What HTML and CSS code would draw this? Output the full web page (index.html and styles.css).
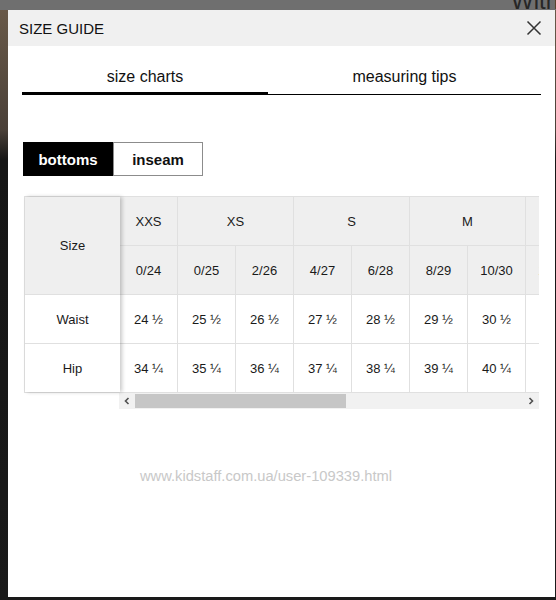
FILE: index.html
```html
<!DOCTYPE html>
<html lang="en">
<head>
<meta charset="utf-8">
<title>Size Guide</title>
<link rel="stylesheet" href="styles.css">
</head>
<body>
<div class="backdrop-text">With</div>
<div class="modal">
  <div class="modal-header">
    <span class="modal-title">SIZE GUIDE</span>
    <span class="close" aria-label="Close">
      <svg width="16" height="16" viewBox="0 0 16 16"><path d="M1.5 1.5 L14.5 14.5 M14.5 1.5 L1.5 14.5" stroke="#333" stroke-width="1.5" fill="none"/></svg>
    </span>
  </div>

  <div class="tabs">
    <div class="tab active">size charts</div>
    <div class="tab">measuring tips</div>
  </div>

  <div class="toggle">
    <div class="toggle-btn on">bottoms</div>
    <div class="toggle-btn">inseam</div>
  </div>

  <div class="chart">
    <div class="chart-grid">
      <div class="fixed">
        <div class="cell head size">Size</div>
        <div class="cell">Waist</div>
        <div class="cell">Hip</div>
      </div>
      <div class="scroller">
        <div class="data">
          <div class="cell head">XXS</div>
          <div class="cell head span2">XS</div>
          <div class="cell head span2">S</div>
          <div class="cell head span2">M</div>
          <div class="cell head span2">L</div>

          <div class="cell head">0/24</div>
          <div class="cell head">0/25</div>
          <div class="cell head">2/26</div>
          <div class="cell head">4/27</div>
          <div class="cell head">6/28</div>
          <div class="cell head">8/29</div>
          <div class="cell head">10/30</div>
          <div class="cell head">12/31</div>
          <div class="cell head">14/32</div>

          <div class="cell">24 ½</div>
          <div class="cell">25 ½</div>
          <div class="cell">26 ½</div>
          <div class="cell">27 ½</div>
          <div class="cell">28 ½</div>
          <div class="cell">29 ½</div>
          <div class="cell">30 ½</div>
          <div class="cell">31 ½</div>
          <div class="cell">32 ½</div>

          <div class="cell">34 ¼</div>
          <div class="cell">35 ¼</div>
          <div class="cell">36 ¼</div>
          <div class="cell">37 ¼</div>
          <div class="cell">38 ¼</div>
          <div class="cell">39 ¼</div>
          <div class="cell">40 ¼</div>
          <div class="cell">41 ¼</div>
          <div class="cell">42 ¼</div>
        </div>
      </div>
    </div>
    <div class="scrollbar">
      <span class="sb-arrow">
        <svg width="8" height="8" viewBox="0 0 8 8"><path d="M5.5 1 L2.5 4 L5.5 7" stroke="#505050" stroke-width="1.6" fill="none"/></svg>
      </span>
      <div class="sb-track"><div class="sb-thumb"></div></div>
      <span class="sb-arrow">
        <svg width="8" height="8" viewBox="0 0 8 8"><path d="M2.5 1 L5.5 4 L2.5 7" stroke="#505050" stroke-width="1.6" fill="none"/></svg>
      </span>
    </div>
  </div>

  <div class="watermark">www.kidstaff.com.ua/user-109339.html</div>
</div>
</body>
</html>
```

FILE: styles.css
```css
html, body {
  height: 600px;
}

body {
  margin: 0;
  padding: 10px 0 0 8px;
  box-sizing: border-box;
  overflow: hidden;
  font-family: "Liberation Sans", Arial, sans-serif;
  color: #111;
  background:
    linear-gradient(to bottom, #6f6f6f 0, #6f6f6f 10px, transparent 10px),
    linear-gradient(to bottom, #6b5b4a 0, #4a4038 130px, #161616 160px, #1a1a1a 100%);
  position: relative;
}

.backdrop-text {
  position: absolute;
  top: -13px;
  left: 511px;
  font-size: 24px;
  color: #262626;
}

.modal {
  position: relative;
  width: 547px;
  height: 587px;
  background: #fff;
}

.modal-header {
  display: flex;
  align-items: center;
  justify-content: space-between;
  height: 36px;
  padding: 0 13px 0 11px;
  background: #f0f0f0;
}

.modal-title {
  font-size: 15px;
  color: #111;
}

.close {
  display: flex;
  width: 16px;
  height: 16px;
}

.tabs {
  display: grid;
  grid-template-columns: 246px 1fr;
  align-items: end;
  margin: 9px 14px 0 14px;
}

.tab {
  text-align: center;
  font-size: 16px;
  line-height: 20px;
  color: #111;
  padding: 12px 0 7px;
  border-bottom: 1px solid #000;
}

.tab.active {
  padding-bottom: 5px;
  border-bottom: 3px solid #000;
}

.toggle {
  display: flex;
  margin: 47px 0 0 15px;
}

.toggle-btn {
  box-sizing: border-box;
  width: 90px;
  height: 34px;
  display: flex;
  align-items: center;
  justify-content: center;
  font-size: 15px;
  font-weight: bold;
  background: #fff;
  color: #111;
  border: 1px solid #8c8c8c;
}

.toggle-btn.on {
  background: #000;
  color: #fff;
  border-color: #000;
}

.chart {
  margin: 20px 0 0 16px;
  width: 515px;
}

.chart-grid {
  display: flex;
  background: #e0e0e0;
  padding: 1px 0 1px 1px;
}

.fixed {
  position: relative;
  z-index: 1;
  width: 95px;
  flex: none;
  display: grid;
  grid-template-rows: 48px 48px 48px 48px;
  row-gap: 1px;
  background: #e0e0e0;
  box-shadow: 2px 0 4px rgba(0, 0, 0, 0.22);
}

.fixed .size {
  grid-row: span 2;
}

.scroller {
  flex: 1;
  overflow: hidden;
}

.data {
  display: grid;
  grid-template-columns: repeat(9, 57px);
  grid-template-rows: repeat(4, 48px);
  gap: 1px;
  width: max-content;
}

.cell {
  display: flex;
  align-items: center;
  justify-content: center;
  background: #fff;
  font-size: 13px;
  color: #1a1a1a;
}

.cell.head {
  background: #efefef;
}

.span2 {
  grid-column: span 2;
}

.scrollbar {
  display: flex;
  align-items: stretch;
  height: 16px;
  margin-left: 95px;
  background: #f1f1f1;
}

.sb-arrow {
  width: 16px;
  display: flex;
  align-items: center;
  justify-content: center;
}

.sb-track {
  flex: 1;
  display: flex;
  align-items: center;
}

.sb-thumb {
  width: 211px;
  height: 14px;
  background: #c6c6c6;
}

.watermark {
  margin: 58px 0 0 132px;
  font-size: 14.7px;
  line-height: 18px;
  color: #c8c8c8;
}
```
